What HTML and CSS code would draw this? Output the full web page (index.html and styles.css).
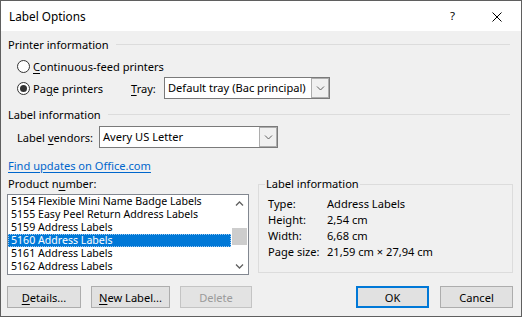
FILE: index.html
```html
<!DOCTYPE html>
<html>
<head>
<meta charset="utf-8">
<title>Label Options</title>
<link rel="stylesheet" href="styles.css">
</head>
<body>
<div class="window">
  <div class="titlebar">
    <span class="title">Label Options</span>
    <span class="help">?</span>
    <span class="close"><svg width="10" height="10" viewBox="0 0 10 10"><path d="M0.5 0.5L9.5 9.5M9.5 0.5L0.5 9.5" stroke="#000" stroke-width="1" fill="none"/></svg></span>
  </div>
  <div class="content">
    <div class="section-head"><span>Printer information</span><span class="rule"></span></div>
    <div class="radio-row first">
      <span class="radio"></span><span><u>C</u>ontinuous-feed printers</span>
    </div>
    <div class="radio-row">
      <span class="radio checked"></span><span class="page-label">Pa<u>g</u>e printers</span>
      <span class="tray-label"><u>T</u>ray:</span>
      <div class="combo tray">
        <span class="value">Default tray (Bac principal)</span>
        <span class="drop"><svg width="9" height="6" viewBox="0 0 9 6"><path d="M1 1.5L4.5 5L8 1.5" stroke="#606060" stroke-width="1" fill="none"/></svg></span>
      </div>
    </div>
    <div class="section-head second"><span>Label information</span><span class="rule"></span></div>
    <div class="vendor-row">
      <span class="vendor-label">Label <u>v</u>endors:</span>
      <div class="combo vendor">
        <span class="value">Avery US Letter</span>
        <span class="drop"><svg width="9" height="6" viewBox="0 0 9 6"><path d="M1 1.5L4.5 5L8 1.5" stroke="#606060" stroke-width="1" fill="none"/></svg></span>
      </div>
    </div>
    <div class="link-row"><a class="link">Find updates on Office.com</a></div>
    <div class="lower">
      <div class="left-col">
        <div class="list-label">Product n<u>u</u>mber:</div>
        <div class="list">
          <div class="items">
            <div class="item">5154 Flexible Mini Name Badge Labels</div>
            <div class="item">5155 Easy Peel Return Address Labels</div>
            <div class="item">5159 Address Labels</div>
            <div class="item sel">5160 Address Labels</div>
            <div class="item">5161 Address Labels</div>
            <div class="item">5162 Address Labels</div>
          </div>
          <div class="scrollbar">
            <span class="arrow"><svg width="9" height="6" viewBox="0 0 9 6"><path d="M1 4.5L4.5 1L8 4.5" stroke="#606060" stroke-width="1.3" fill="none"/></svg></span>
            <span class="track"><span class="thumb"></span></span>
            <span class="arrow"><svg width="9" height="6" viewBox="0 0 9 6"><path d="M1 1.5L4.5 5L8 1.5" stroke="#606060" stroke-width="1.3" fill="none"/></svg></span>
          </div>
        </div>
      </div>
      <fieldset class="info">
        <legend>Label information</legend>
        <div class="info-row"><span class="k">Type:</span><span>Address Labels</span></div>
        <div class="info-row"><span class="k">Height:</span><span>2,54 cm</span></div>
        <div class="info-row"><span class="k">Width:</span><span>6,68 cm</span></div>
        <div class="info-row"><span class="k">Page size:</span><span>21,59 cm × 27,94 cm</span></div>
      </fieldset>
    </div>
    <div class="buttons">
      <span class="btn details"><u>D</u>etails...</span>
      <span class="btn newlabel"><u>N</u>ew Label...</span>
      <span class="btn delete disabled">Delete</span>
      <span class="spacer"></span>
      <span class="btn ok">OK</span>
      <span class="btn cancel">Cancel</span>
    </div>
  </div>
</div>
</body>
</html>
```
FILE: styles.css
```css
* { box-sizing: border-box; }
html, body { margin: 0; padding: 0; }
body {
  font-family: "Segoe UI", "Noto Sans", sans-serif;
  font-size: 11.1px;
  color: #000;
  background: #f0f0f0;
}
u { text-decoration: underline; text-underline-offset: 2px; }
.window {
  width: 522px;
  height: 317px;
  border: 1px solid #5f5f5f;
  display: flex;
  flex-direction: column;
  overflow: hidden;
}
.titlebar {
  height: 30px;
  flex: none;
  background: #fff;
  display: flex;
  align-items: center;
  padding-left: 8px;
  padding-right: 19px;
}
.title { font-size: 11.8px; }
.help { margin-left: auto; width: 7px; text-align: center; font-size: 11.5px; margin-top: -1px; }
.close { margin-left: 36px; width: 10px; height: 10px; display: flex; margin-top: 1px; }
.content {
  flex: 1;
  background: #f0f0f0;
  padding: 0 8px 0 6px;
}
.section-head {
  display: flex;
  align-items: center;
  height: 16px;
  margin-top: 5px;
  padding-left: 1px;
}
.section-head.second { margin-top: 7px; }
.rule {
  flex: 1;
  border-top: 1px solid #dcdcdc;
  margin-left: 7px;
  margin-right: 3px;
}
.radio-row {
  display: flex;
  align-items: center;
  height: 22px;
  padding-left: 10px;
}
.radio-row.first { margin-top: 3px; }
.radio {
  width: 13px;
  height: 13px;
  border: 1px solid #333;
  border-radius: 50%;
  background: #fff;
  margin-right: 3px;
  display: flex;
  align-items: center;
  justify-content: center;
  flex: none;
}
.radio.checked::after {
  content: "";
  width: 7px;
  height: 7px;
  border-radius: 50%;
  background: #333;
}
.page-label { width: 98px; }
.tray-label { width: 33px; }
.combo {
  display: flex;
  height: 22px;
  border: 1px solid #7a7a7a;
  background: #fff;
}
.combo .value { flex: 1; padding-left: 3px; line-height: 20px; white-space: nowrap; overflow: hidden; }
.combo .drop {
  width: 18px;
  flex: none;
  border: 1px solid #adadad;
  background: #f0f0f0;
  display: flex;
  align-items: center;
  justify-content: center;
}
.combo.tray { width: 166px; }
.combo.vendor { width: 179px; }
.vendor-row {
  display: flex;
  align-items: center;
  height: 22px;
  margin-top: 4px;
  padding-left: 10px;
}
.vendor-label { width: 82px; }
.link-row { margin-top: 10px; height: 16px; line-height: 16px; padding-left: 1px; }
.link { color: #0066cc; text-decoration: underline; text-underline-offset: 2px; }
.lower { display: flex; margin-top: 2px; height: 99px; }
.left-col { width: 242px; flex: none; }
.list-label { height: 16px; line-height: 16px; padding-left: 1px; }
.list {
  margin-top: 2px;
  width: 242px;
  height: 81px;
  border: 1px solid #828790;
  background: #fff;
  display: flex;
}
.items { flex: 1; overflow: hidden; }
.item { height: 13px; line-height: 13px; font-size: 10.6px; padding-left: 3px; white-space: nowrap; }
.item.sel {
  background: #0078d7;
  color: #fff;
  outline: 1px dotted #9cc8f0;
  outline-offset: -1px;
}
.scrollbar {
  width: 17px;
  display: flex;
  flex-direction: column;
  background: #fff;
}
.arrow {
  height: 17px;
  display: flex;
  align-items: center;
  justify-content: center;
}
.track { flex: 1; display: flex; flex-direction: column; }
.thumb {
  margin: 16px 1px 0 1px;
  height: 17px;
  background: #cdcdcd;
}
.info {
  margin: 0 0 0 9px;
  width: 255px;
  height: 97px;
  border: 1px solid #dcdcdc;
  padding: 4px 0 0 6px;
}
.info legend { padding: 0 1px; line-height: 16px; }
.info-row { display: flex; height: 16px; line-height: 16px; padding-left: 3px; }
.info-row .k { width: 59px; }
.buttons {
  display: flex;
  margin-top: 11px;
  height: 22px;
}
.btn {
  height: 22px;
  border: 1px solid #adadad;
  background: #e1e1e1;
  display: flex;
  align-items: center;
  justify-content: center;
}
.details { width: 74px; }
.newlabel { width: 79px; margin-left: 10px; }
.delete { width: 72px; margin-left: 10px; }
.disabled { color: #9a9a9a; border-color: #c4c4c4; background: #e3e3e3; }
.spacer { flex: 1; }
.ok { width: 73px; border: 2px solid #0078d7; }
.cancel { width: 73px; margin-left: 11px; }
```
